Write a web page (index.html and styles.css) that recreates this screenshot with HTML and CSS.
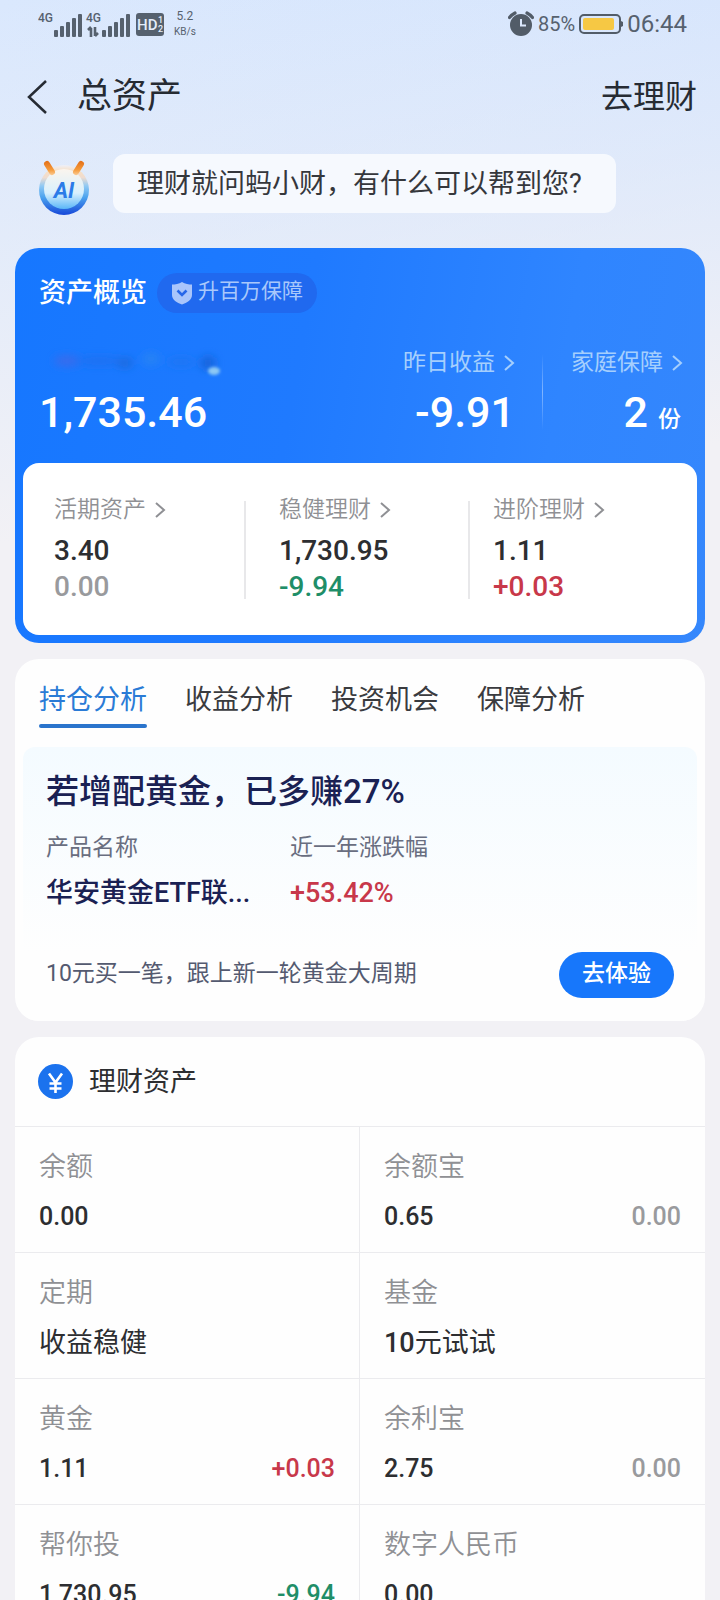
FILE: index.html
```html
<!DOCTYPE html>
<html lang="zh-CN">
<head>
<meta charset="utf-8">
<meta name="viewport" content="width=device-width, initial-scale=1">
<title>总资产</title>
<link rel="stylesheet" href="styles.css">
</head>
<body>
<svg class="defs" width="0" height="0" aria-hidden="true">
  <symbol id="chevron" viewBox="0 0 12 18"><path d="M2 2l8 7-8 7" fill="none" stroke="currentColor" stroke-width="2"/></symbol>
</svg>
<div class="app">
  <div class="status">
    <svg class="status-cell" width="126" height="30" viewBox="0 0 126 30" fill="#56616e">
      <text x="0" y="13" class="net">4G</text>
      <rect x="16" y="21" width="4" height="7" rx="1"/><rect x="22" y="17" width="4" height="11" rx="1"/><rect x="28" y="13" width="4" height="15" rx="1"/><rect x="34" y="9" width="4" height="19" rx="1"/><rect x="40" y="5" width="4" height="23" rx="1"/>
      <text x="48" y="13" class="net">4G</text>
      <path d="M53 28v-9M50 21l3-3M57 18v9M57 27l3-3" stroke="#56616e" stroke-width="2.6" fill="none"/>
      <rect x="64" y="21" width="4" height="7" rx="1"/><rect x="70" y="17" width="4" height="11" rx="1"/><rect x="76" y="13" width="4" height="15" rx="1"/><rect x="82" y="9" width="4" height="19" rx="1"/><rect x="88" y="5" width="4" height="23" rx="1"/>
      <rect x="98" y="4" width="28" height="23" rx="3"/>
      <text x="99" y="21" class="hd">HD</text>
      <text x="120" y="14" class="hd-sub">1</text><text x="120" y="23" class="hd-sub">2</text>
    </svg>
    <div class="speed"><span>5.2</span><span>KB/s</span></div>
    <div class="status-right">
      <svg width="26" height="26" viewBox="0 0 26 26"><circle cx="13" cy="14" r="11" fill="#525c68"/><path d="M1.500 6.500a17 17 0 0 1 5.500-4.500M24.500 6.500a17 17 0 0 0-5.500-4.500" stroke="#525c68" stroke-width="3.200" fill="none" stroke-linecap="round"/><path d="M13 8v6.500h5" stroke="#dbe8fd" stroke-width="2" fill="none"/></svg>
      <span class="percent">85%</span>
      <svg width="44" height="20" viewBox="0 0 44 20"><rect x="1" y="1" width="40" height="18" rx="4" fill="none" stroke="#525c68" stroke-width="2"/><rect x="4" y="4" width="31" height="12" rx="2" fill="#f6c844"/><path d="M42 7l2 1v4l-2 1z" fill="#525c68"/></svg>
      <span class="clock">06:44</span>
    </div>
  </div>

  <header class="header">
    <button class="back" type="button" aria-label="返回"><svg width="20" height="34" viewBox="0 0 20 34"><path d="M19 1L2 17l17 16" fill="none" stroke="#262b33" stroke-width="2.500"/></svg></button>
    <h1 class="title">总资产</h1>
    <a class="header-link" href="#">去理财</a>
  </header>

  <div class="assistant">
    <svg class="robot" width="52" height="56" viewBox="0 0 52 56" aria-hidden="true">
      <defs>
        <linearGradient id="ring" x1="0" y1="0" x2="0" y2="1"><stop offset="0" stop-color="#eef0f8"/><stop offset=".12" stop-color="#f8dfc4"/><stop offset=".25" stop-color="#efdcd0"/><stop offset=".42" stop-color="#8fc9f4"/><stop offset=".65" stop-color="#4ba2ee"/><stop offset="1" stop-color="#1647d8"/></linearGradient>
        <linearGradient id="face" x1="0" y1="0" x2="0" y2="1"><stop offset="0" stop-color="#fbf5ee"/><stop offset=".6" stop-color="#d8f0fd"/><stop offset="1" stop-color="#5ab6f8"/></linearGradient>
        <linearGradient id="horn" gradientUnits="userSpaceOnUse" x1="0" y1="2" x2="0" y2="16"><stop offset="0" stop-color="#e5741c"/><stop offset=".55" stop-color="#f59a3a"/><stop offset="1" stop-color="#fbd3a2"/></linearGradient>
      </defs>
      <circle cx="26" cy="30" r="25" fill="url(#ring)"/>
      <circle cx="26" cy="29" r="20" fill="url(#face)"/>
      <path d="M9 4l5 8M43 4l-5 8" stroke="url(#horn)" stroke-width="6" stroke-linecap="round"/>
      <text x="26" y="38" text-anchor="middle" class="robot-text">AI</text>
    </svg>
    <a class="bubble" href="#">理财就问蚂小财，有什么可以帮到您?</a>
  </div>

  <section class="overview">
    <div class="overview-head">
      <h2 class="overview-title">资产概览</h2>
      <a class="pill" href="#"><svg width="22" height="24" viewBox="0 0 22 24"><path d="M11 1C8 3 4 3.500 1 3.500V14c0 5 5 7.500 10 9.500 5-2 10-4.500 10-9.500V3.500C18 3.500 14 3 11 1z" fill="#a9c5fb"/><path d="M6.500 9.500L11 14l4.500-4.500" stroke="#2767e9" stroke-width="2.600" fill="none"/></svg><span class="pill-text">升百万保障</span></a>
    </div>
    <div class="metrics">
      <div class="metric total">
        <svg class="smudge" width="200" height="32" viewBox="0 0 200 32" aria-hidden="true">
          <defs><filter id="soft" x="-50%" y="-50%" width="200%" height="200%"><feGaussianBlur stdDeviation="4"/></filter><filter id="fine" x="-50%" y="-50%" width="200%" height="200%"><feGaussianBlur stdDeviation="1.500"/></filter></defs>
          <g filter="url(#soft)"><ellipse cx="28" cy="14" rx="13" ry="5" fill="#3a6aea"/><ellipse cx="60" cy="14" rx="24" ry="4" fill="#1f70f0"/><ellipse cx="86" cy="16" rx="8" ry="5" fill="#1a69dc"/><ellipse cx="112" cy="12" rx="9" ry="6" fill="#2683f4"/><ellipse cx="142" cy="15" rx="14" ry="4" fill="#1d74f2"/><ellipse cx="169" cy="16" rx="8" ry="7" fill="#1464da"/></g>
          <ellipse cx="175" cy="24" rx="6" ry="4" fill="#8cc8f4" filter="url(#fine)"/>
        </svg>
        <strong class="big">1,735.46</strong>
      </div>
      <a class="metric yesterday" href="#"><span class="metric-label">昨日收益<svg class="chev"><use href="#chevron"/></svg></span><strong class="big">-9.91</strong></a>
      <a class="metric family" href="#"><span class="metric-label">家庭保障<svg class="chev"><use href="#chevron"/></svg></span><strong class="big">2<span class="unit">份</span></strong></a>
    </div>
    <div class="groups">
      <a class="group" href="#"><span class="group-label">活期资产<svg class="chev"><use href="#chevron"/></svg></span><strong class="amount">3.40</strong><span class="amount muted">0.00</span></a>
      <a class="group" href="#"><span class="group-label">稳健理财<svg class="chev"><use href="#chevron"/></svg></span><strong class="amount">1,730.95</strong><span class="amount down">-9.94</span></a>
      <a class="group" href="#"><span class="group-label">进阶理财<svg class="chev"><use href="#chevron"/></svg></span><strong class="amount">1.11</strong><span class="amount up">+0.03</span></a>
    </div>
  </section>

  <section class="card analysis">
    <div class="tabs" role="tablist">
      <button class="tab active" type="button" role="tab" aria-selected="true">持仓分析</button>
      <button class="tab" type="button" role="tab" aria-selected="false">收益分析</button>
      <button class="tab" type="button" role="tab" aria-selected="false">投资机会</button>
      <button class="tab" type="button" role="tab" aria-selected="false">保障分析</button>
    </div>
    <div class="promo">
      <h3 class="promo-title">若增配黄金，已多赚27%</h3>
      <dl class="facts">
        <div class="fact"><dt>产品名称</dt><dd>华安黄金ETF联...</dd></div>
        <div class="fact"><dt>近一年涨跌幅</dt><dd class="up">+53.42%</dd></div>
      </dl>
      <div class="promo-foot"><span>10元买一笔，跟上新一轮黄金大周期</span><button class="try" type="button">去体验</button></div>
    </div>
  </section>

  <section class="card">
    <h2 class="list-title"><svg width="35" height="35" viewBox="0 0 35 35" aria-hidden="true"><circle cx="17.500" cy="17.500" r="17.500" fill="#1b72ee"/><path d="M11 9.500l6.500 9 6.500-9M17.500 18v11M11.500 19.500h12M11.500 24.500h12" fill="none" stroke="#fff" stroke-width="2.600"/></svg>理财资产</h2>
    <div class="assets">
      <a class="asset" href="#"><span class="asset-name">余额</span><span class="asset-row"><b>0.00</b></span></a>
      <a class="asset" href="#"><span class="asset-name">余额宝</span><span class="asset-row"><b>0.65</b><span class="muted">0.00</span></span></a>
      <a class="asset" href="#"><span class="asset-name">定期</span><span class="asset-row hint">收益稳健</span></a>
      <a class="asset" href="#"><span class="asset-name">基金</span><span class="asset-row hint"><span><b>10</b>元试试</span></span></a>
      <a class="asset" href="#"><span class="asset-name">黄金</span><span class="asset-row"><b>1.11</b><span class="up">+0.03</span></span></a>
      <a class="asset" href="#"><span class="asset-name">余利宝</span><span class="asset-row"><b>2.75</b><span class="muted">0.00</span></span></a>
      <a class="asset" href="#"><span class="asset-name">帮你投</span><span class="asset-row"><b>1,730.95</b><span class="down">-9.94</span></span></a>
      <a class="asset" href="#"><span class="asset-name">数字人民币</span><span class="asset-row"><b>0.00</b></span></a>
    </div>
  </section>
</div>
</body>
</html>
```
FILE: styles.css
```css
* { box-sizing: border-box; }
body, h1, h2, h3, dl, dd { margin: 0; }
body {
  font-family: Roboto, "Noto Sans CJK SC", sans-serif;
  color: #2d2e31;
  background: #f2f1f5;
}
h1, h2, h3 { font-weight: 400; }
a { color: inherit; text-decoration: none; }
button { font: inherit; color: inherit; background: none; border: 0; padding: 0; }
svg { display: block; flex: none; }
.defs { position: absolute; }
.app {
  height: 100vh;
  overflow: hidden;
  background: linear-gradient(172deg, #f2f1f500 0, #f2f1f560 14%, #f2f1f5 32%), linear-gradient(90deg, #dae8fd, #d3e4fe);
}
.up { color: #c8384a; }
.down { color: #1f8e68; }
.muted { color: #999a9d; }

.status { display: flex; align-items: center; height: 48px; padding: 0 33px 0 38px; color: #56616e; }
.net { font-size: 12px; font-weight: 500; }
.hd { font-size: 15px; font-weight: 500; fill: #e4edfb; }
.hd-sub { font-size: 9px; font-weight: 500; fill: #e4edfb; }
.speed { display: flex; flex-direction: column; align-items: center; margin-left: 10px; font-size: 10px; line-height: 16px; }
.speed span:first-child { font-size: 12px; }
.status-right { display: flex; align-items: center; gap: 4px; margin-left: auto; }
.percent { font-size: 20px; }
.clock { font-size: 24px; }

.header { display: flex; align-items: center; height: 92px; padding: 5px 23px 0 27px; color: #262b33; }
.back { width: 50px; display: flex; }
.title { font-size: 35px; line-height: 48px; }
.header-link { margin-left: auto; font-size: 32px; line-height: 48px; }

.assistant { display: flex; align-items: flex-start; gap: 23px; padding: 14px 38px 32px; }
.robot { margin-top: 6px; }
.robot-text { font-size: 22px; font-weight: 700; font-style: italic; fill: #2b7be8; }
.bubble { padding: 10px 34px 9px 24px; border-radius: 12px; background: #f6f9fe; font-size: 27px; line-height: 40px; color: #35373c; white-space: nowrap; }

.overview { margin: 0 15px; padding: 25px 8px 8px; border-radius: 24px; background: linear-gradient(100deg, #1677ff, #1f7aff 40%, #2f85ff 75%, #3587fc); color: #fff; }
.overview-head { display: flex; align-items: center; gap: 10px; padding: 0 16px; }
.overview-title { font-size: 27px; line-height: 40px; font-weight: 500; }
.pill { display: flex; align-items: center; gap: 5px; height: 40px; padding: 0 14px; border-radius: 20px; background: #2069ef; color: #a9c8fb; }
.pill-text { padding-bottom: 4px; font-size: 21px; line-height: 32px; }
.metrics { display: flex; padding: 34px 14px 26px 16px; }
.metric { display: flex; flex-direction: column; gap: 8px; }
.total { flex: 1; }
.metric-label, .group-label { display: flex; align-items: center; gap: 8px; font-size: 23px; line-height: 32px; }
.metric-label { color: #a5cffd; }
.chev { width: 12px; height: 18px; }
.big { height: 50px; font-size: 43px; line-height: 50px; font-weight: 500; }
.yesterday { align-items: flex-end; padding-right: 28px; background: linear-gradient(#fff0, #ffffff66, #fff0) right 50% / 1px 76px no-repeat; }
.family { align-items: flex-end; padding-left: 28px; }
.unit { margin: 0 2px 0 10px; font-size: 23px; line-height: 32px; }
.groups { display: grid; grid-template-columns: 221fr 224fr 229fr; padding: 31px 0 30px; border-radius: 16px; background: #fff; color: #2d2e31; }
.group { display: flex; flex-direction: column; padding-left: 31px; }
.group + .group { padding-left: 35px; background: linear-gradient(#e8e8ea, #e8e8ea) left 50% / 2px 98px no-repeat; }
.group + .group + .group { padding-left: 25px; }
.group-label { margin-bottom: 7px; color: #8f9094; font-weight: 350; }
.amount { font-size: 28px; line-height: 36px; font-weight: 500; }

.card { margin: 16px 15px 0; border-radius: 24px; background: #fefefe; overflow: hidden; }
.tabs { display: flex; gap: 38px; padding: 21px 24px 19px; }
.tab { padding-bottom: 4px; font-size: 27px; line-height: 40px; border-bottom: 4px solid transparent; color: #3a3b3f; }
.tab.active { color: #2a7bd6; position: relative; }
.tab.active::after { content: ""; position: absolute; left: 0; right: 0; bottom: -4px; height: 4px; border-radius: 2px; background: #2a74cc; }
.promo { margin: 0 8px; padding: 23px 23px; border-radius: 12px; background: linear-gradient(#f4fbff, #fefefe 75%); color: #1a2153; }
.promo-title { font-size: 33px; line-height: 44px; font-weight: 500; }
.facts { display: grid; grid-template-columns: 244px 1fr; padding: 18px 0 41px; }
.fact dt { font-size: 23px; line-height: 32px; color: #696e80; margin-bottom: 11px; }
.fact dd { font-size: 27px; line-height: 36px; font-weight: 500; white-space: nowrap; }
.promo-foot { display: flex; align-items: center; justify-content: space-between; font-size: 23px; line-height: 32px; color: #545a70; }
.promo-foot span { padding-bottom: 2px; }
.try { height: 46px; padding: 0 23px 2px; border-radius: 23px; background: #1777fb; color: #fff; font-weight: 500; }

.list-title { display: flex; align-items: center; gap: 16px; height: 89px; padding: 0 23px; font-size: 27px; line-height: 40px; }
.assets { display: grid; grid-template-columns: 1fr 1fr; }
.asset { border-top: 1px solid #ebebee; padding: 20px 24px 17px; font-size: 25px; }
.asset:nth-child(odd) { border-right: 1px solid #ebebee; }
.asset-name { display: block; margin-bottom: 12px; font-size: 27px; line-height: 40px; font-weight: 350; color: #8f9094; }
.asset-row { display: flex; justify-content: space-between; height: 36px; line-height: 36px; font-weight: 500; }
.asset-row b { font-weight: 500; }
.asset-row.hint { font-size: 27px; font-weight: 400; }
```
